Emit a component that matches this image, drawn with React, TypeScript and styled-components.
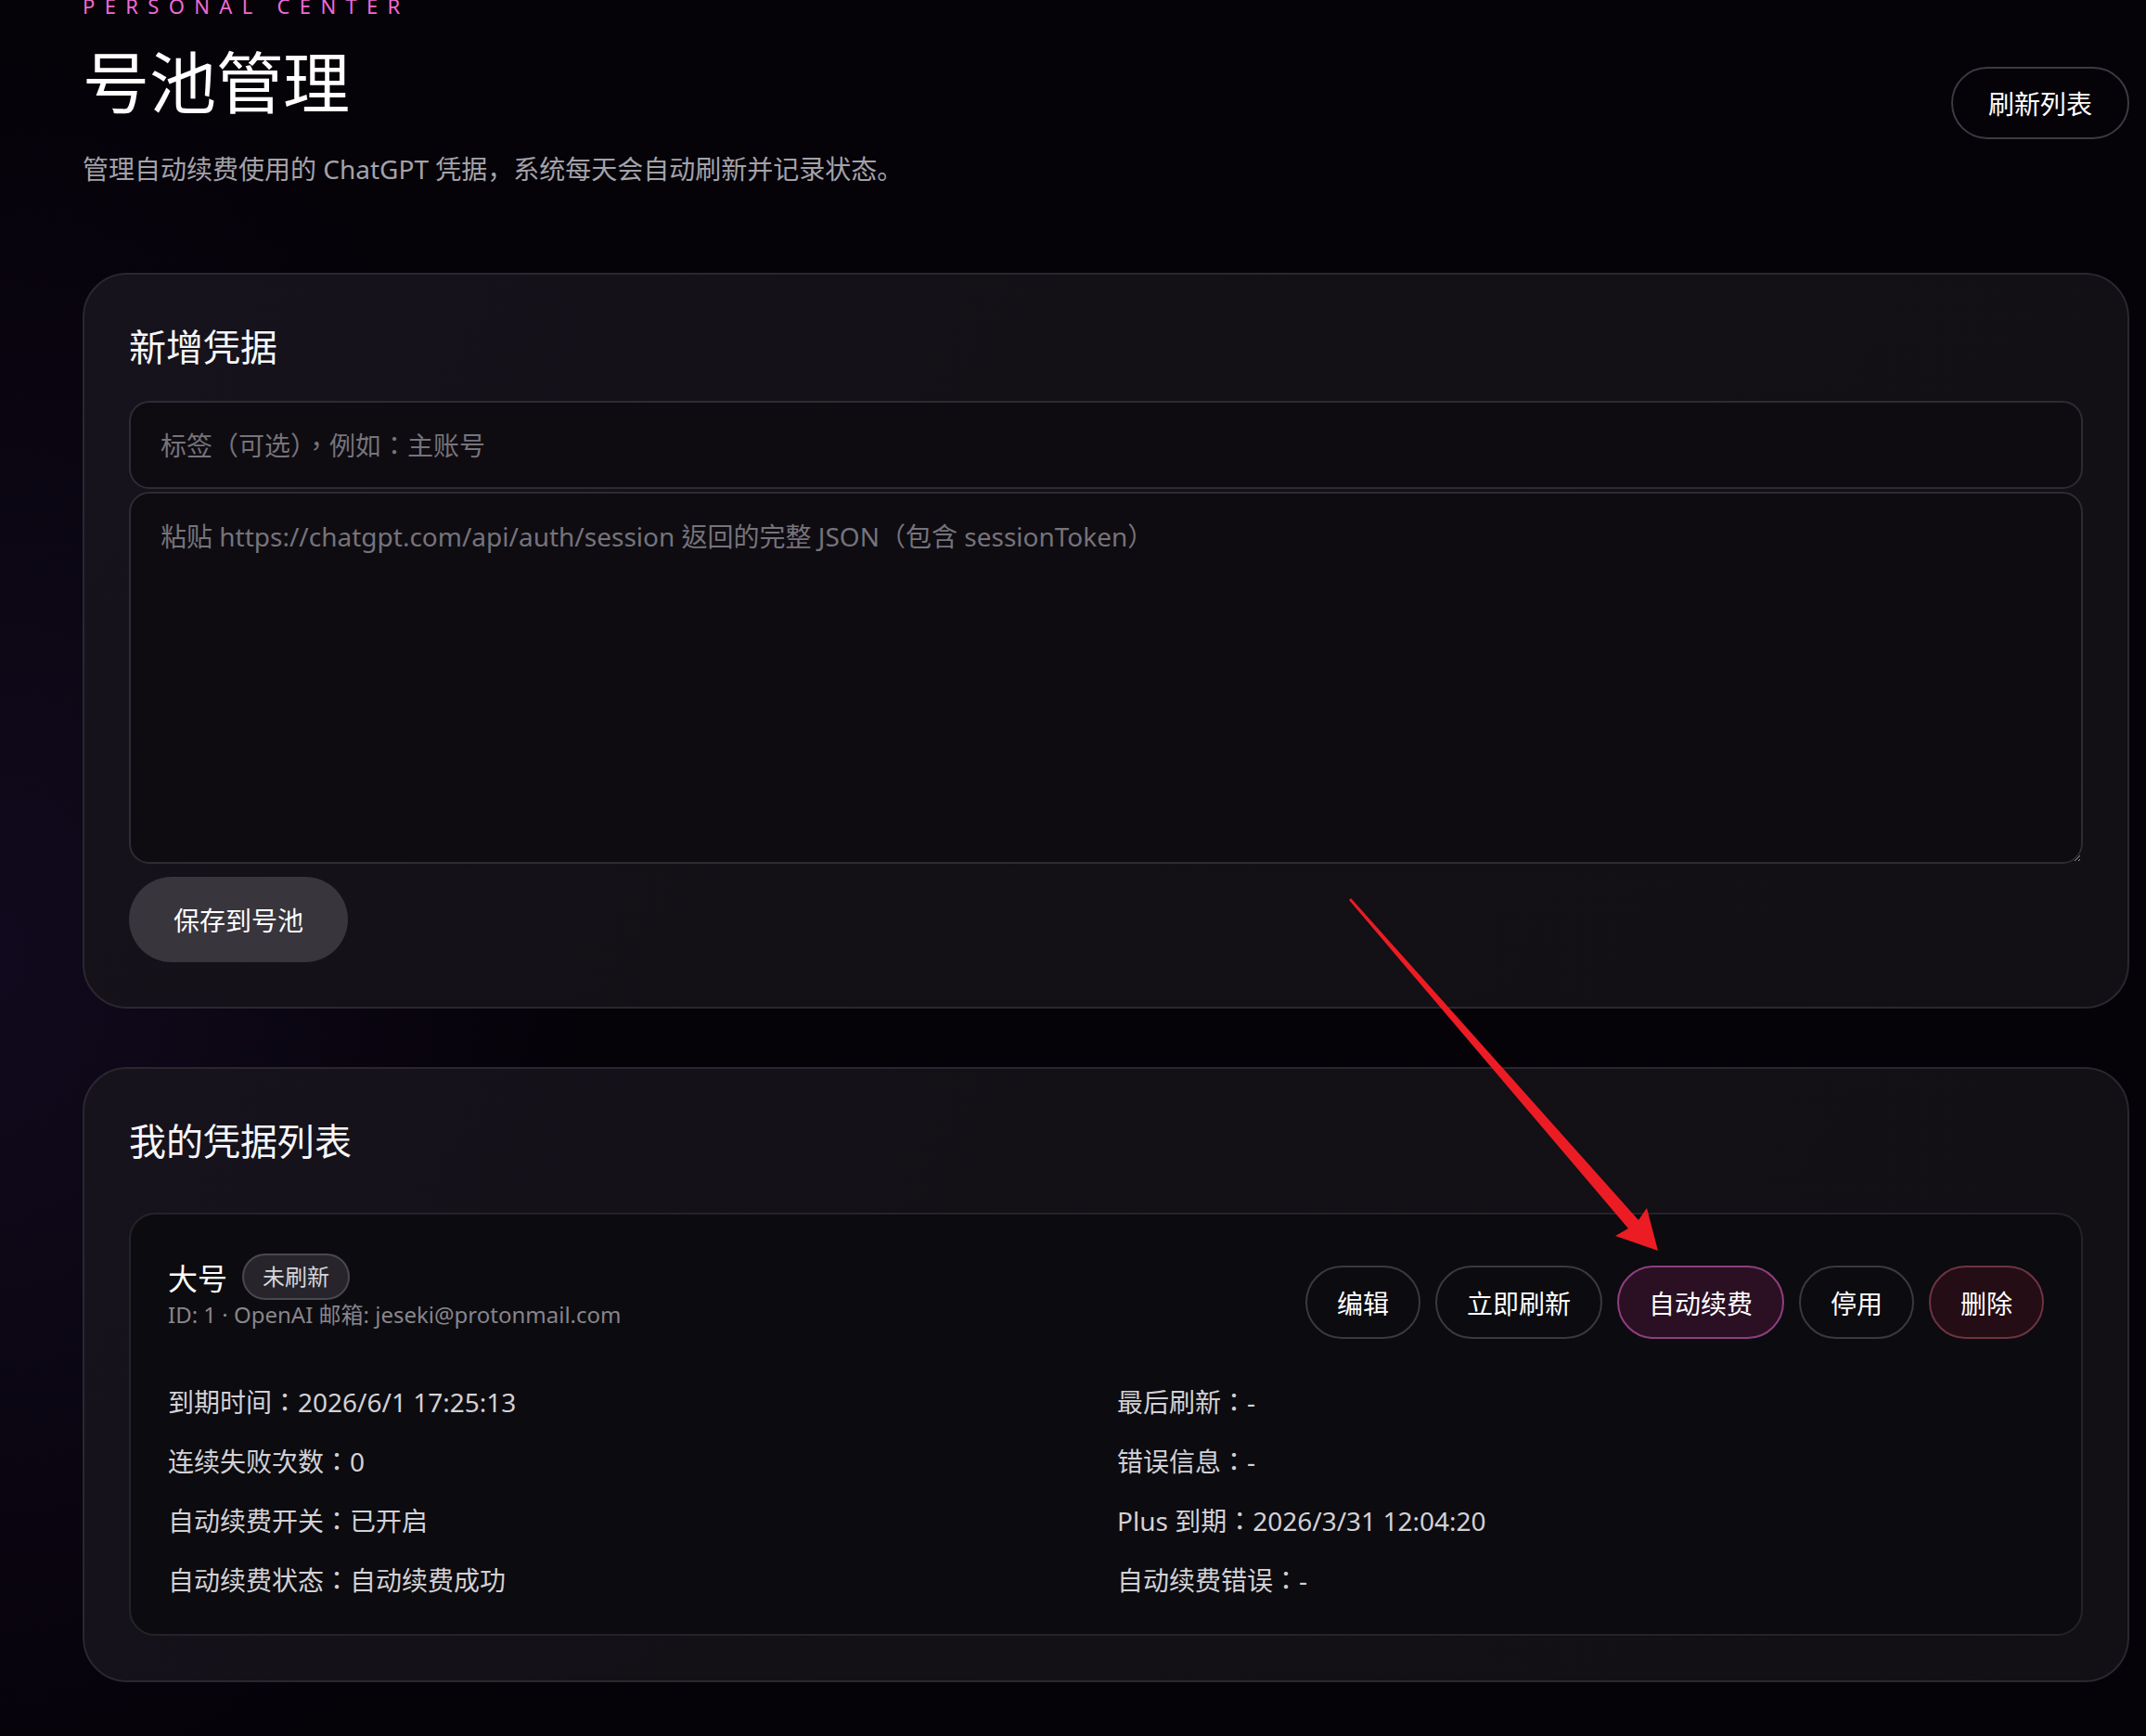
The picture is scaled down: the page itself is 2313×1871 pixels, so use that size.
import React from "react";
import styled, { createGlobalStyle } from "styled-components";

const GlobalStyle = createGlobalStyle`
  html, body {
    margin: 0;
    padding: 0;
    background: #050208;
  }
  body {
    font-family: "Noto Sans", "Noto Sans CJK TC", "Noto Sans CJK SC", sans-serif;
    color: #f4f4f6;
    overflow: hidden;
  }
  * {
    box-sizing: border-box;
  }
`;

const Page = styled.div`
  position: relative;
  min-height: 1871px;
  padding: 0 18px 40px 89px;
  background: radial-gradient(
      ellipse 900px 1400px at 0% 55%,
      rgba(40, 24, 70, 0.35),
      rgba(5, 2, 8, 0) 70%
    ),
    #050208;
`;

const Header = styled.header`
  display: flex;
  justify-content: space-between;
  align-items: flex-start;
`;

const TitleBlock = styled.div`
  display: flex;
  flex-direction: column;
`;

const Eyebrow = styled.div`
  margin-top: -5px;
  font-size: 22px;
  line-height: 22px;
  letter-spacing: 0.47em;
  color: #f06ad6;
`;

const Title = styled.h1`
  margin: 28px 0 0;
  font-size: 72px;
  line-height: 86px;
  font-weight: 400;
  color: #ffffff;
`;

const Subtitle = styled.p`
  margin: 30px 0 0;
  font-family: "Noto Sans", "Noto Sans CJK SC", sans-serif;
  font-size: 28px;
  line-height: 42px;
  color: #a4a2a9;
`;

const PillButton = styled.button<{ $tone?: "default" | "accent" | "danger" }>`
  height: 79px;
  padding: 0 32px;
  border-radius: 40px;
  font-family: inherit;
  font-size: 28px;
  color: #ffffff;
  cursor: pointer;
  white-space: nowrap;
  border: 2px solid
    ${(p) =>
      p.$tone === "accent" ? "#8e3f80" : p.$tone === "danger" ? "#6d3441" : "#3b3940"};
  background: ${(p) =>
    p.$tone === "accent" ? "#2b1023" : p.$tone === "danger" ? "#250d15" : "transparent"};
`;

const RefreshButton = styled(PillButton)`
  margin-top: 72px;
  height: 78px;
  padding: 0 38px;
  border-color: #3d3a42;
`;

const Card = styled.section<{ $gap: number }>`
  margin-top: ${(p) => p.$gap}px;
  border: 2px solid #2a2730;
  border-radius: 48px;
  padding: 48px 48px 48px;
  background: linear-gradient(120deg, #17131d 0%, #131016 40%, #121015 100%);
`;

const CardTitle = styled.h2<{ $after: number }>`
  margin: 0 0 ${(p) => p.$after}px;
  font-size: 40px;
  line-height: 60px;
  font-weight: 400;
  color: #f6f6f8;
`;

const fieldBase = `
  display: block;
  width: 100%;
  border: 2px solid #2e2c33;
  border-radius: 22px;
  background: #0e0c11;
  color: #f4f4f6;
  font-family: inherit;
  font-size: 28px;
  line-height: 43px;
  outline: none;
  &::placeholder {
    color: #76737b;
  }
`;

const TextInput = styled.input`
  ${fieldBase}
  height: 95px;
  padding: 0 32px;
`;

const TextArea = styled.textarea`
  ${fieldBase}
  margin-top: 3px;
  height: 401px;
  padding: 25px 32px;
  resize: vertical;
`;

const SaveButton = styled.button`
  margin-top: 14px;
  height: 92px;
  padding: 0 48px;
  border: none;
  border-radius: 46px;
  background: #38353d;
  color: #ffffff;
  font-family: inherit;
  font-size: 28px;
  cursor: pointer;
`;

const Item = styled.div`
  border: 2px solid #25232a;
  border-radius: 28px;
  padding: 42px 40px 37px;
  background: #0c0b0f;
`;

const ItemTop = styled.div`
  display: flex;
  justify-content: space-between;
  align-items: flex-start;
`;

const NameRow = styled.div`
  display: flex;
  align-items: center;
  gap: 16px;
  height: 50px;
`;

const Name = styled.span`
  font-size: 32px;
  color: #ffffff;
`;

const Badge = styled.span`
  height: 50px;
  padding: 0 20px;
  border: 2px solid #4a474f;
  border-radius: 25px;
  background: #27252b;
  font-size: 24px;
  line-height: 46px;
  color: #d6d5da;
`;

const Meta = styled.div`
  font-size: 24px;
  line-height: 32px;
  color: #87858c;
`;

const Actions = styled.div`
  display: flex;
  gap: 16px;
  margin-top: 13px;
`;

const Details = styled.div`
  display: grid;
  grid-template-columns: 1fr 1fr;
  column-gap: 24px;
  row-gap: 22px;
  margin-top: 47px;
`;

const Detail = styled.div`
  font-size: 28px;
  line-height: 42px;
  color: #d2d1d6;
`;

const Overlay = styled.svg`
  position: absolute;
  left: 0;
  top: 0;
  pointer-events: none;
`;

const details: [string, string][] = [
  ["到期时间：2026/6/1 17:25:13", "最后刷新：-"],
  ["连续失败次数：0", "错误信息：-"],
  ["自动续费开关：已开启", "Plus 到期：2026/3/31 12:04:20"],
  ["自动续费状态：自动续费成功", "自动续费错误：-"],
];

export default function App() {
  return (
    <>
      <GlobalStyle />
      <Page>
        <Header>
          <TitleBlock>
            <Eyebrow>PERSONAL CENTER</Eyebrow>
            <Title>号池管理</Title>
            <Subtitle>管理自动续费使用的 ChatGPT 凭据，系统每天会自动刷新并记录状态。</Subtitle>
          </TitleBlock>
          <RefreshButton>刷新列表</RefreshButton>
        </Header>

        <Card $gap={91}>
          <CardTitle $after={28}>新增凭据</CardTitle>
          <TextInput placeholder="标签（可选），例如：主账号" />
          <TextArea placeholder="粘贴 https://chatgpt.com/api/auth/session 返回的完整 JSON（包含 sessionToken）" />
          <SaveButton>保存到号池</SaveButton>
        </Card>

        <Card $gap={63}>
          <CardTitle $after={47}>我的凭据列表</CardTitle>
          <Item>
            <ItemTop>
              <div>
                <NameRow>
                  <Name>大号</Name>
                  <Badge>未刷新</Badge>
                </NameRow>
                <Meta>ID: 1 · OpenAI 邮箱: jeseki@protonmail.com</Meta>
              </div>
              <Actions>
                <PillButton>编辑</PillButton>
                <PillButton>立即刷新</PillButton>
                <PillButton $tone="accent">自动续费</PillButton>
                <PillButton>停用</PillButton>
                <PillButton $tone="danger">删除</PillButton>
              </Actions>
            </ItemTop>
            <Details>
              {details.map(([l, r]) => (
                <React.Fragment key={l}>
                  <Detail>{l}</Detail>
                  <Detail>{r}</Detail>
                </React.Fragment>
              ))}
            </Details>
          </Item>
        </Card>

        <Overlay width="2313" height="1871" viewBox="0 0 2313 1871">
          <polygon
            fill="#ec1c24"
            points="1456,968 1766,1315 1775,1302 1787,1348 1741,1332 1755,1324 1454,970"
          />
        </Overlay>
      </Page>
    </>
  );
}
